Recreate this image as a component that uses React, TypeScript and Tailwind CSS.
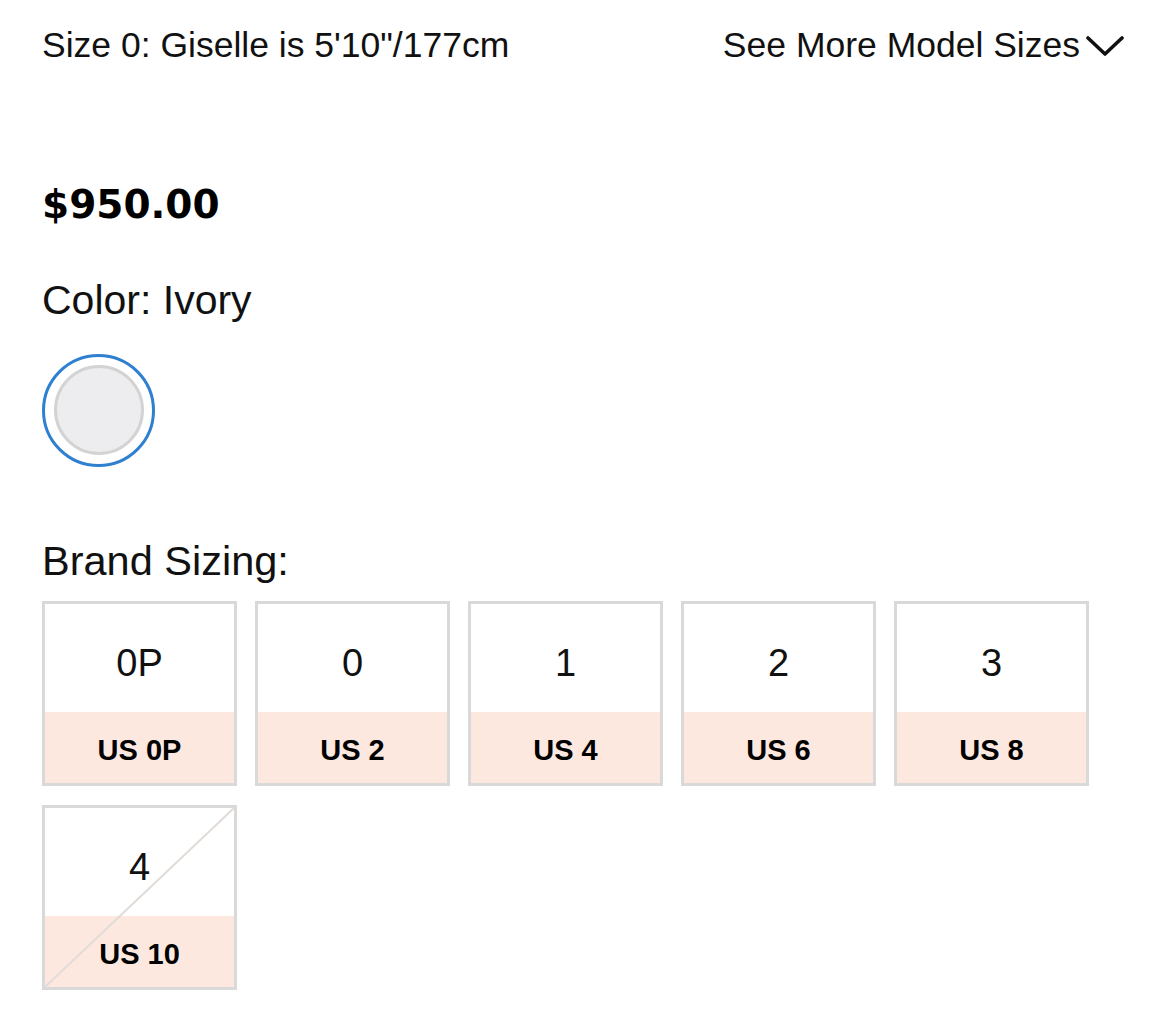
const sizes = [
  { label: '0P', us: 'US 0P', soldOut: false },
  { label: '0', us: 'US 2', soldOut: false },
  { label: '1', us: 'US 4', soldOut: false },
  { label: '2', us: 'US 6', soldOut: false },
  { label: '3', us: 'US 8', soldOut: false },
  { label: '4', us: 'US 10', soldOut: true },
];

const SizeBox = ({ label, us, soldOut }: { label: string; us: string; soldOut: boolean }) => {
  return (
    <div className="relative flex flex-col w-[195px] border-[3px] border-[#d9d9d9] bg-white">
      <div className="h-[108px] flex items-center justify-center pt-[10px] text-[38px] leading-none font-light text-[#111]">
        {label}
      </div>
      <div className="h-[71px] flex items-center justify-center pt-[6px] bg-[#fde8e0] text-[29px] leading-none font-bold text-black">
        {us}
      </div>
      {soldOut && (
        <svg
          className="absolute inset-0 w-full h-full pointer-events-none"
          viewBox="0 0 100 100"
          preserveAspectRatio="none"
        >
          <line
            x1="0"
            y1="100"
            x2="100"
            y2="0"
            stroke="#e2dcd8"
            strokeWidth="2"
            vectorEffect="non-scaling-stroke"
          />
        </svg>
      )}
    </div>
  );
};

const App = () => {
  return (
    <div className="min-h-screen bg-white text-[#111] font-['Liberation_Sans',Arial,sans-serif] pl-[42px] pr-[46px] pt-[28px] pb-10">
      <div className="flex items-center justify-between text-[35.5px] leading-none">
        <span>Size 0: Giselle is 5'10"/177cm</span>
        <button className="flex items-center gap-[6px]">
          <span>See More Model Sizes</span>
          <svg width="38" height="22" viewBox="0 0 38 22" fill="none">
            <polyline
              points="2,3 19,19 36,3"
              stroke="#111"
              strokeWidth="3.6"
              strokeLinecap="round"
              strokeLinejoin="round"
            />
          </svg>
        </button>
      </div>

      <div className="mt-[121px] text-[39px] leading-none font-bold text-black font-['DejaVu_Sans',sans-serif]">
        $950.00
      </div>

      <div className="mt-[56px] text-[41px] leading-none">Color: Ivory</div>

      <div className="mt-[33px] w-[113px] h-[113px] rounded-full border-[3px] border-[#2f80d1] flex items-center justify-center">
        <div className="w-[90px] h-[90px] rounded-full border-[3px] border-[#d3d3d3] bg-[#ededef]" />
      </div>

      <div className="mt-[73px] text-[41.5px] leading-none">Brand Sizing:</div>

      <div className="mt-[20px] grid grid-cols-5 w-[1047px] gap-x-[18px] gap-y-[19px]">
        {sizes.map((s) => (
          <SizeBox key={s.label} {...s} />
        ))}
      </div>
    </div>
  );
};

export default App;
